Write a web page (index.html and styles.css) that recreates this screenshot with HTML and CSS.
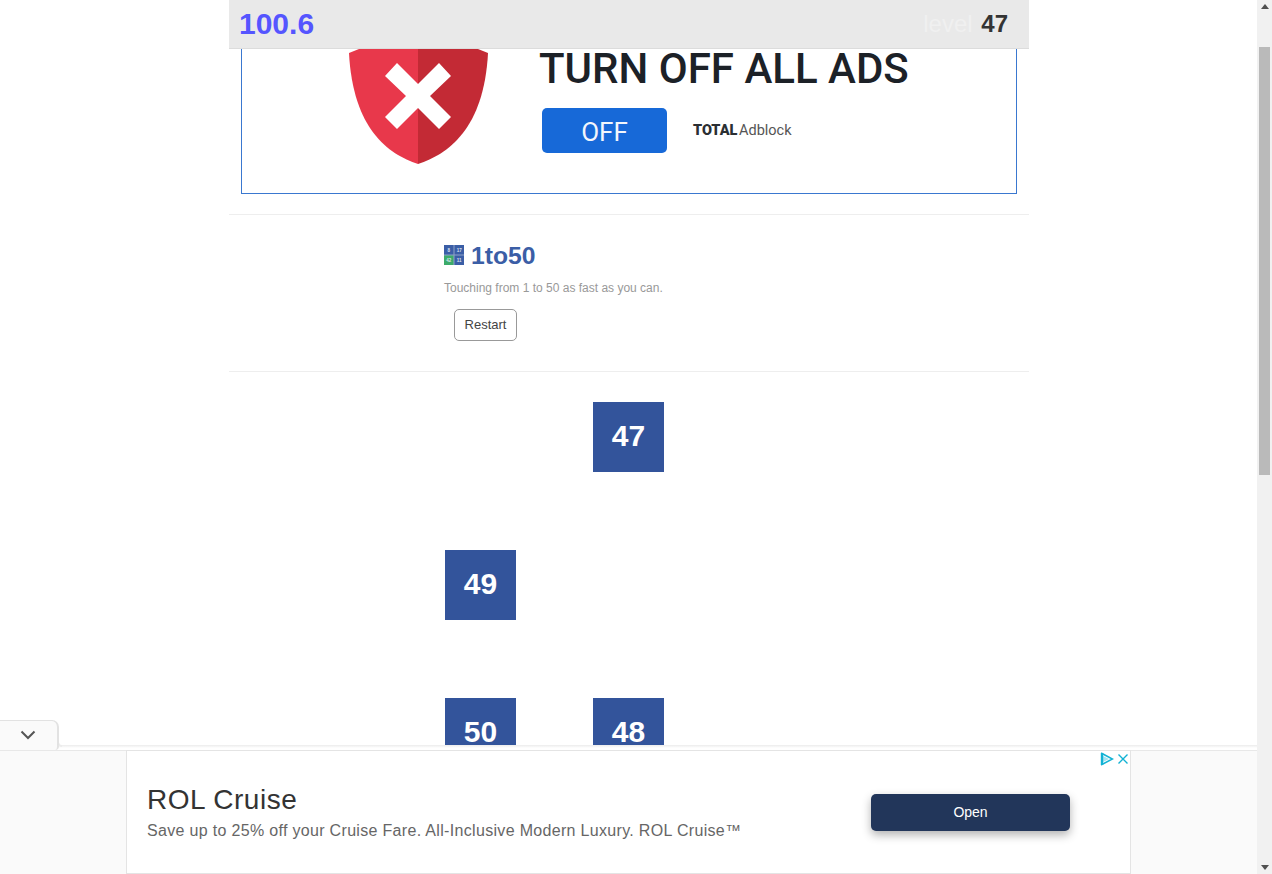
FILE: index.html
```html
<!DOCTYPE html>
<html lang="en">
<head>
    <meta charset="UTF-8">
    <title>1to50</title>
    <link rel="stylesheet" href="styles.css">
</head>
<body>
    <div class="page">
        <div class="wrap">
            <div class="topbar">
                <div class="timer">100.6</div>
                <div class="level"><span class="level-label">level</span> <b>47</b></div>
            </div>

            <div class="banner">
                <svg class="shield" width="140" height="115" viewBox="0 0 140 115">
                    <path d="M1 4 L11 0 L70 -12 L70 115 C40 105 5 80 1 4 Z" fill="#e8384b"/>
                    <path d="M140 4 L130 0 L70 -12 L70 115 C100 105 136 80 140 4 Z" fill="#c32a35"/>
                    <path d="M49 14 L70 35 L91 14 L103 27 L82 47 L103 68 L91 80 L70 59 L49 80 L37 68 L58 47 L37 27 Z" fill="#fff"/>
                </svg>
                <div class="banner-right">
                    <div class="banner-title">TURN OFF ALL ADS</div>
                    <div class="banner-row">
                        <div class="off-btn">OFF</div>
                        <div class="brand"><b>TOTAL</b> Adblock</div>
                    </div>
                </div>
            </div>

            <div class="intro">
                <h1>
                    <svg class="logo" width="20" height="20" viewBox="0 0 20 20">
                        <rect width="20" height="20" fill="#8fa3c9"/>
                        <rect width="9.5" height="9.5" fill="#3b5ea6"/>
                        <rect x="10.5" width="9.5" height="9.5" fill="#3b5ea6"/>
                        <rect y="10.5" width="9.5" height="9.5" fill="#3cab6a"/>
                        <rect x="10.5" y="10.5" width="9.5" height="9.5" fill="#3b5ea6"/>
                        <text class="logo-num" x="4.8" y="6.8">8</text>
                        <text class="logo-num" x="15.2" y="6.8">17</text>
                        <text class="logo-num" x="4.8" y="17.2">42</text>
                        <text class="logo-num" x="15.2" y="17.2">11</text>
                    </svg>
                    1to50
                </h1>
                <p>Touching from 1 to 50 as fast as you can.</p>
                <button class="restart">Restart</button>
            </div>

            <div class="board">
                <div class="tile tile-2">47</div>
                <div class="tile tile-1">49</div>
                <div class="tile tile-1">50</div>
                <div class="tile tile-2">48</div>
            </div>
        </div>

        <div class="scrollbar">
            <div class="arrow-up"></div>
            <div class="thumb"></div>
            <div class="arrow-down"></div>
        </div>
    </div>

    <div class="anchor-ad">
        <div class="ad-tab">
            <svg width="16" height="10" viewBox="0 0 16 10"><path d="M1.5 1.5 L8 8 L14.5 1.5" fill="none" stroke="#555" stroke-width="2"/></svg>
        </div>
        <div class="ad-body">
            <div class="ad-card">
                <div class="ad-icons">
                    <svg width="14" height="14" viewBox="0 0 14 14">
                        <path d="M3 4 L9 7 L3 10 Z" fill="#a5e3f0"/>
                        <path d="M2 1.5 L12.5 7 L2 12.5 Z" fill="none" stroke="#12b2d4" stroke-width="1.6"/>
                        <path d="M2 1 L2 13" stroke="#12b2d4" stroke-width="2.4"/>
                    </svg>
                    <svg width="12" height="12" viewBox="0 0 12 12"><path d="M1.5 1.5 L10.5 10.5 M10.5 1.5 L1.5 10.5" fill="none" stroke="#12b2d4" stroke-width="1.4"/></svg>
                </div>
                <div class="ad-text">
                    <div class="ad-title">ROL Cruise</div>
                    <div class="ad-desc">Save up to 25% off your Cruise Fare. All-Inclusive Modern Luxury. ROL Cruise™</div>
                </div>
                <div class="ad-open">Open</div>
            </div>
        </div>
    </div>
</body>
</html>
```

FILE: styles.css
```css
html, body {
    margin: 0;
    height: 100%;
    overflow: hidden;
}
body {
    font-family: "Liberation Sans", Arial, sans-serif;
    background-color: #fff;
}
.page {
    display: flex;
    height: 874px;
}
.wrap {
    width: 800px;
    margin: 0 228px 0 229px;
}
.topbar {
    height: 48px;
    background-color: #e9e9e9;
    border-bottom: 1px solid #dcdcdc;
    display: flex;
    justify-content: space-between;
    align-items: center;
    padding: 0 21px 0 10px;
}
.timer {
    font-size: 30px;
    font-weight: bold;
    color: #5555ff;
}
.level {
    font-size: 24px;
    color: #333;
}
.level-label {
    color: #f0f0f0;
    margin-right: 2px;
}
.banner {
    height: 144px;
    margin: 0 12px;
    border: 1px solid #3a78d0;
    border-top: none;
    display: flex;
    padding-left: 106px;
    gap: 51px;
}
.shield {
    flex: none;
    overflow: hidden;
}
.banner-right {
    display: flex;
    flex-direction: column;
}
.banner-title {
    font-family: Roboto, sans-serif;
    font-size: 42px;
    font-weight: 500;
    line-height: 40px;
    color: #1c2127;
    white-space: nowrap;
}
.banner-row {
    display: flex;
    align-items: center;
    margin: 19px 0 0 3px;
    gap: 26px;
}
.off-btn {
    width: 125px;
    height: 45px;
    line-height: 49px;
    background-color: #1769d8;
    border-radius: 5px;
    color: #f2f6fc;
    font-family: Roboto, sans-serif;
    font-size: 26px;
    text-align: center;
}
.brand {
    font-family: Roboto, sans-serif;
    font-size: 14.5px;
    color: #555;
    margin-top: -1px;
}
.brand b {
    font-weight: 900;
    color: #2b2f33;
    margin-right: -2px;
}
.intro {
    margin-top: 20px;
    border-top: 1px solid #eee;
    border-bottom: 1px solid #eee;
    height: 156px;
    padding-left: 215px;
}
h1 {
    margin: 28px 0 0;
    font-size: 24.7px;
    line-height: 26px;
    color: #3b5ea6;
    display: flex;
    align-items: center;
    gap: 7px;
}
.logo {
    flex: none;
    margin-top: -2px;
}
.logo-num {
    font-size: 4.5px;
    font-weight: bold;
    fill: #dbe3f2;
    text-anchor: middle;
}
.intro p {
    margin: 12px 0 0;
    font-size: 12px;
    line-height: 14px;
    color: #999;
}
.restart {
    display: block;
    margin: 14px 0 0 10px;
    width: 63px;
    height: 32px;
    padding: 0 0 2px;
    background-color: #fff;
    border: 1px solid #999;
    border-radius: 5px;
    font-family: "Liberation Sans", Arial, sans-serif;
    font-size: 13px;
    color: #444;
}
.board {
    margin: 30px 0 0 216px;
    display: grid;
    grid-template-columns: 71px 71px;
    grid-auto-rows: 70px;
    column-gap: 77px;
    row-gap: 78px;
}
.tile {
    padding-bottom: 2px;
    box-sizing: border-box;
    background-color: #33549b;
    color: #fff;
    font-size: 30px;
    font-weight: bold;
    display: flex;
    align-items: center;
    justify-content: center;
}
.tile-1 {
    grid-column: 1;
}
.tile-2 {
    grid-column: 2;
}
.tile:nth-child(4) {
    grid-row: 3;
}
.scrollbar {
    width: 15px;
    height: 874px;
    background-color: #f1f1f1;
    display: flex;
    flex-direction: column;
    align-items: center;
}
.thumb {
    width: 11px;
    height: 428px;
    margin-top: 38px;
    background-color: #bababa;
}
.arrow-up {
    margin-top: 4px;
    border: 4px solid transparent;
    border-top: none;
    border-bottom: 5px solid #505050;
}
.arrow-down {
    margin-top: auto;
    margin-bottom: 4px;
    border: 4px solid transparent;
    border-bottom: none;
    border-top: 5px solid #505050;
}
.anchor-ad {
    position: fixed;
    left: 0;
    bottom: 0;
    width: 1257px;
}
.ad-tab {
    position: relative;
    z-index: 1;
    width: 59px;
    height: 30px;
    margin-bottom: -5px;
    padding-bottom: 1px;
    padding-right: 1px;
    background-color: #fafafa;
    border-top: 1px solid #e2e2e2;
    border-right: 2px solid #e2e2e2;
    border-top-right-radius: 7px;
    border-bottom-right-radius: 4px;
    display: flex;
    align-items: center;
    justify-content: center;
    box-sizing: border-box;
}
.ad-tab::after {
    content: "";
    position: absolute;
    left: 100%;
    bottom: 3px;
    width: 5px;
    height: 5px;
    background-color: #fff;
    border-bottom-left-radius: 5px;
    border-left: 2px solid #e2e2e2;
    border-bottom: 2px solid #ececec;
    box-sizing: border-box;
}
.ad-body {
    height: 129px;
    padding-top: 5px;
    box-sizing: border-box;
    background-color: #fafafa;
    background-image: linear-gradient(#ececec, #fff 3px);
    background-size: 100% 5px;
    background-repeat: no-repeat;
}
.ad-card {
    position: relative;
    width: 1005px;
    height: 124px;
    margin-left: 126px;
    box-sizing: border-box;
    background-color: #fff;
    border: 1px solid #e4e4e4;
    display: flex;
    align-items: center;
    justify-content: space-between;
    padding: 0 60px 0 20px;
}
.ad-body::before {
    content: "";
    display: block;
    height: 1px;
    margin-bottom: -1px;
    background-color: #e8e8e8;
}
.ad-icons {
    position: absolute;
    top: 1px;
    right: 1px;
    display: flex;
    align-items: center;
    gap: 3px;
}
.ad-title {
    font-size: 28px;
    line-height: 34px;
    letter-spacing: 0.5px;
    color: #333;
}
.ad-desc {
    margin-top: 4px;
    font-size: 16px;
    line-height: 20px;
    letter-spacing: 0.32px;
    color: #666;
}
.ad-open {
    width: 199px;
    height: 37px;
    line-height: 37px;
    background-color: #22365a;
    border-radius: 5px;
    box-shadow: 0 4px 10px rgba(0,0,0,0.3);
    color: #fff;
    font-size: 14px;
    text-align: center;
}
```
